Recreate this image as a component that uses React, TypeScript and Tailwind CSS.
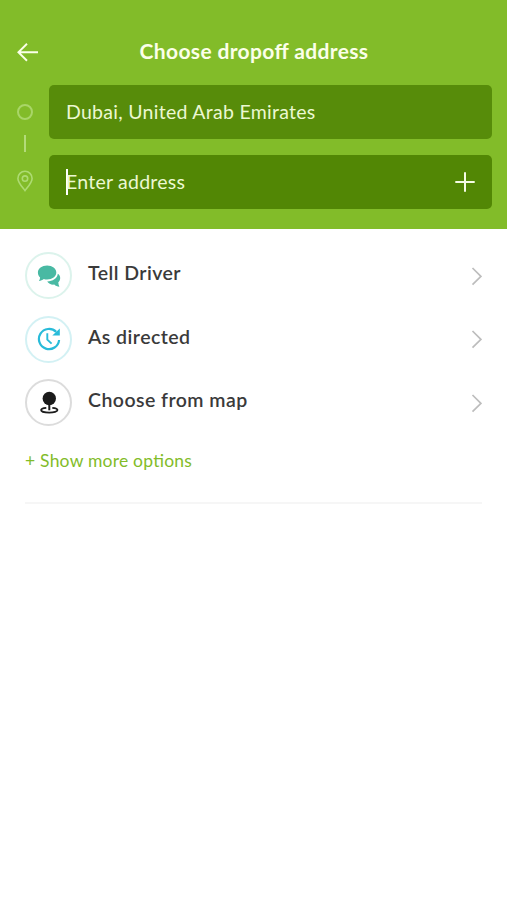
import type { ReactNode } from 'react'

interface Option {
  label: string
  ring: string
  icon: ReactNode
}

function BackArrow() {
  return (
    <svg className="h-5 w-6" viewBox="0 0 24 20" fill="none" stroke="#fbffe9" strokeWidth="1.9">
      <path d="M11 1.8 2.4 10.3l8.6 8.5M2.6 10.3H22" />
    </svg>
  )
}

function PinOutline() {
  return (
    <svg className="h-[22px] w-4" viewBox="0 0 16 22" fill="none" stroke="#addb72" strokeWidth="1.6">
      <path d="M8 20.6C5.6 17.3.9 12.6.9 8.4a7.1 7.1 0 0 1 14.2 0c0 4.2-4.7 8.9-7.1 12.2Z" />
      <circle cx="8" cy="8.6" r="2.7" />
    </svg>
  )
}

function ChatIcon() {
  return (
    <svg className="h-6 w-6" viewBox="0 0 24 24" fill="#49b9a3">
      <path d="M10.1 1.6c5.100 0 9.200 3.100 9.200 7s-4.100 7-9.200 7c-1.200 0-2.300-.1-3.300-.5-1.300 1.200-3 1.800-4.900 1.900.8-1 1.200-2.200 1.200-3.400C1.700 12.300.9 10.500.9 8.600c0-3.900 4.100-7 9.200-7Z" />
      <path d="M20.800 9.800c1.500 1 2.400 2.500 2.400 4.200 0 1.800-.8 3.300-1.900 4.300 0 1.500.4 3 1.100 4.500-2-.1-3.900-.8-5.100-2.200-2.800.4-5.700-.7-7.100-3.100 5.400-.2 10.100-3 10.600-7.700Z" />
    </svg>
  )
}

function ClockIcon() {
  return (
    <svg className="h-6 w-6" viewBox="0 0 24 24" fill="none" stroke="#29bbd9" strokeWidth="2.2">
      <path d="M19.2 4.9A10.1 10.1 0 1 0 22.1 13" />
      <path d="M10.3 6.300v6.300l4.300 4" strokeWidth="1.9" />
      <path d="M22.8 1.500v7h-7.500l3-2.800Z" fill="#29bbd9" stroke="none" />
    </svg>
  )
}

function MapPinIcon() {
  return (
    <svg className="h-6 w-6" viewBox="0 0 24 24" fill="none" stroke="#1b1b1b">
      <circle cx="12.3" cy="7.5" r="6.7" fill="#1b1b1b" stroke="none" />
      <path d="M12.3 13v6.300" strokeWidth="2" />
      <path d="M9.300 16.800c-3.200.2-5.200 1.100-5.200 2.300 0 1.500 3.600 2.600 8.200 2.600s8.200-1.100 8.200-2.600c0-1.200-2-2.100-5.200-2.300" strokeWidth="1.8" />
    </svg>
  )
}

function Chevron() {
  return (
    <svg className="h-5 w-3" viewBox="0 0 12 20" fill="none" stroke="#bdbdbd" strokeWidth="1.7">
      <path d="m2.5 2 8.4 8.300-8.400 8.300" />
    </svg>
  )
}

const options: Option[] = [
  { label: 'Tell Driver', ring: 'border-[#dcf3ec]', icon: <ChatIcon /> },
  { label: 'As directed', ring: 'border-[#d3f1f4]', icon: <ClockIcon /> },
  { label: 'Choose from map', ring: 'border-[#dcdcdc]', icon: <MapPinIcon /> },
]

export default function App() {
  return (
    <div className="h-[900px] w-[507px] overflow-hidden bg-white font-['Lato',sans-serif]">
      <header className="h-[229px] bg-[#82bc29] pt-8 pr-[15px]">
        <div className="flex h-10 items-center pl-4">
          <BackArrow />
          <h1 className="ml-[99.5px] pb-[2px] text-[21px] font-bold tracking-[0.36px] whitespace-nowrap text-[#fbffe9] [font-feature-settings:'liga'_1]">
            Choose dropoff address
          </h1>
        </div>

        <div className="mt-[13px] flex">
          <div className="flex w-[49px] flex-col items-center pt-[19px]">
            <span className="h-4 w-4 rounded-full border-2 border-[#a9d668]" />
            <span className="mt-[15px] h-[17px] w-[2px] bg-[#b3db79]" />
            <span className="mt-[18px]">
              <PinOutline />
            </span>
          </div>
          <div className="flex flex-1 flex-col gap-4">
            <div className="flex h-[54px] items-center rounded-[5px] bg-[#578c0a] px-[17px] text-[19.5px] tracking-[0.28px] text-[#ecf8d2]">
              Dubai, United Arab Emirates
            </div>
            <div className="flex h-[54px] items-center rounded-[5px] bg-[#528705] pr-4 pl-[17px] text-[19.5px] tracking-[0.24px] text-[#ecf8d2]">
              <span className="-mr-[2px] h-[26px] w-[2px] bg-white" />
              <span>Enter address</span>
              <svg className="ml-auto h-[22px] w-[22px]" viewBox="0 0 22 22" stroke="#f5fce5" strokeWidth="2">
                <path d="M11 1.3v19.4M1.3 11h19.4" />
              </svg>
            </div>
          </div>
        </div>
      </header>

      <main className="px-[25px] pt-[15px]">
        <ul>
          {options.map((option) => (
            <li key={option.label} className="flex h-[63.5px] items-center">
              <span className={`flex h-[47px] w-[47px] items-center justify-center rounded-full border-2 ${option.ring}`}>
                {option.icon}
              </span>
              <span className="ml-4 pb-[6px] text-[19.5px] font-semibold tracking-[0.45px] text-[#3a3a3a]">{option.label}</span>
              <span className="ml-auto">
                <Chevron />
              </span>
            </li>
          ))}
        </ul>
        <button className="mt-[14px] block h-6 text-[17.5px] leading-6 tracking-[0.22px] text-[#82bc29] [font-feature-settings:'liga'_1]">
          + Show more options
        </button>
        <hr className="mt-[29.5px] h-[2px] border-0 bg-[#f6f6f6]" />
      </main>
    </div>
  )
}
